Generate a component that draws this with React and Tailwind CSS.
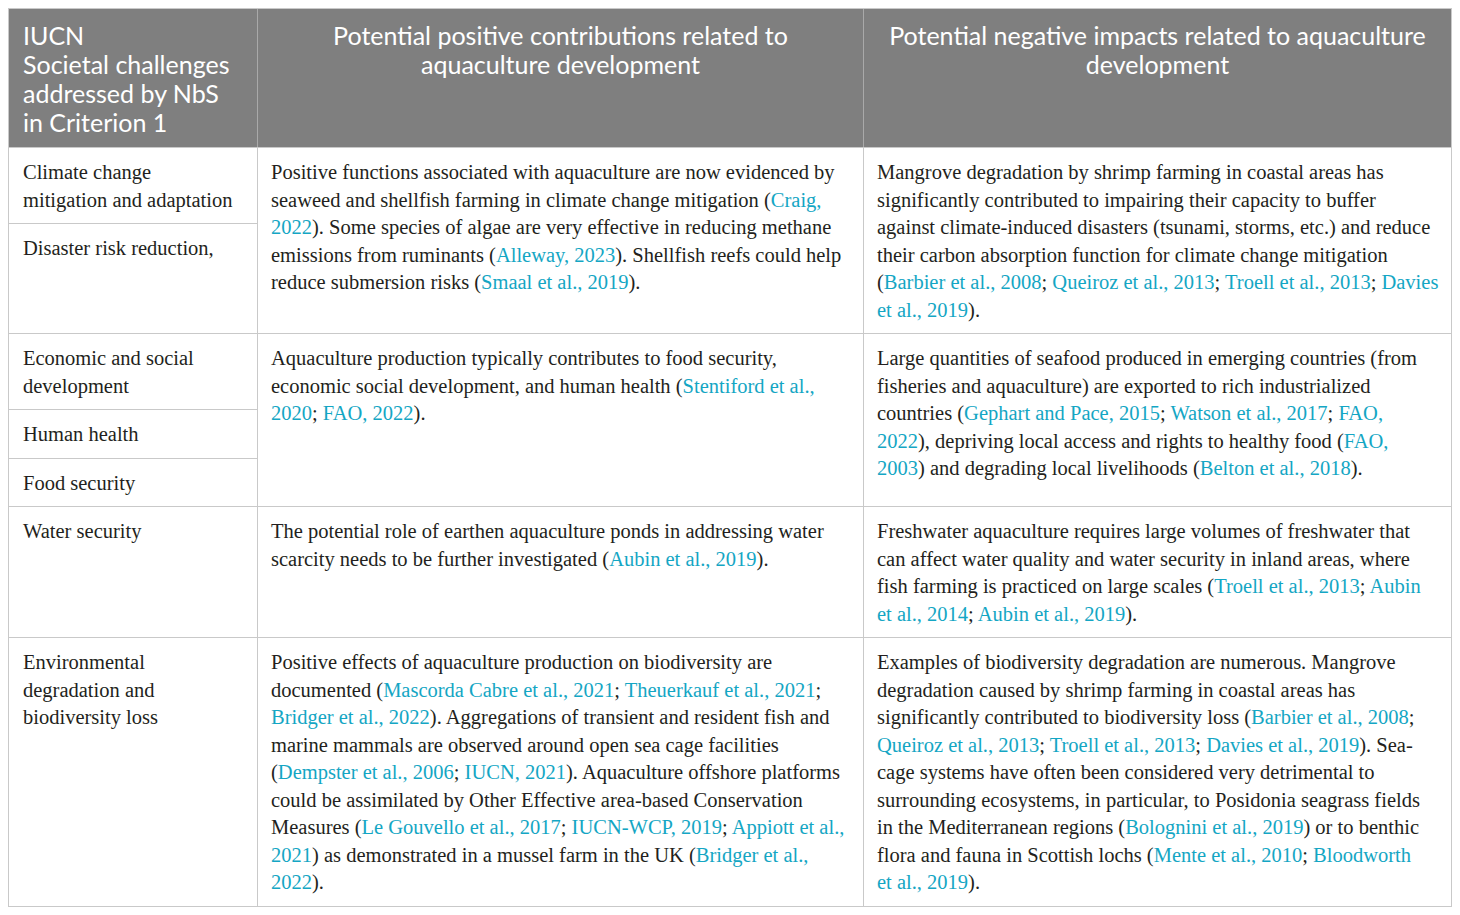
import React from "react";

const L = ({ children }) => <span className="text-[#14a6c4]">{children}</span>;

const Lines = ({ lines }) => (
  <div>
    {lines.map((ln, i) => (
      <div key={i} className="whitespace-nowrap">
        {ln}
      </div>
    ))}
  </div>
);

const cellText = "font-['Liberation_Serif',serif] text-[20.5px] leading-[27.5px] text-[#231f20]";

function Cell({ w, last, children, className = "" }) {
  return (
    <div
      className={`${w} shrink-0 ${last ? "" : "border-r border-[#c9c9c9]"} pt-[11px] pb-[9px] px-[13px] ${className}`}
    >
      {children}
    </div>
  );
}

function Sub({ children, grow, last }) {
  return (
    <div
      className={`${grow ? "flex-1" : ""} ${last ? "" : "border-b border-[#c9c9c9]"} pt-[11px] pb-[9px] pl-[14px] pr-[6px]`}
    >
      {children}
    </div>
  );
}

export default function App() {
  return (
    <div className="bg-white w-[1460px] h-[915px] p-2">
      <div className={`w-[1444px] border border-[#c9c9c9] ${cellText}`}>
        {/* header */}
        <div className="flex bg-[#7f7f7f] text-white font-['Lato',sans-serif] text-[25px] leading-[29px] border-b border-[#c9c9c9]">
          <div className="w-[249px] shrink-0 border-r border-[#a9a9a9] pt-[12px] pb-[10px] pl-[14px] h-[138px]">
            <div>IUCN</div>
            <div>Societal challenges</div>
            <div>addressed by NbS</div>
            <div>in Criterion 1</div>
          </div>
          <div className="w-[606px] shrink-0 border-r border-[#a9a9a9] pt-[12px] text-center">
            <div>Potential positive contributions related to</div>
            <div>aquaculture development</div>
          </div>
          <div className="flex-1 pt-[12px] text-center">
            <div>Potential negative impacts related to aquaculture</div>
            <div>development</div>
          </div>
        </div>

        {/* row 1 */}
        <div className="flex border-b border-[#c9c9c9]">
          <div className="w-[249px] shrink-0 flex flex-col border-r border-[#c9c9c9]">
            <Sub>
              <div>Climate change</div>
              <div>mitigation and adaptation</div>
            </Sub>
            <Sub grow last>
              <div>Disaster risk reduction,</div>
            </Sub>
          </div>
          <Cell w="w-[606px]">
            <Lines
              lines={[
                "Positive functions associated with aquaculture are now evidenced by",
                <>seaweed and shellfish farming in climate change mitigation (<L>Craig,</L></>,
                <><L>2022</L>). Some species of algae are very effective in reducing methane</>,
                <>emissions from ruminants (<L>Alleway, 2023</L>). Shellfish reefs could help</>,
                <>reduce submersion risks (<L>Smaal et al., 2019</L>).</>,
              ]}
            />
          </Cell>
          <Cell w="flex-1" last>
            <Lines
              lines={[
                "Mangrove degradation by shrimp farming in coastal areas has",
                "significantly contributed to impairing their capacity to buffer",
                "against climate-induced disasters (tsunami, storms, etc.) and reduce",
                "their carbon absorption function for climate change mitigation",
                <>(<L>Barbier et al., 2008</L>; <L>Queiroz et al., 2013</L>; <L>Troell et al., 2013</L>; <L>Davies</L></>,
                <><L>et al., 2019</L>).</>,
              ]}
            />
          </Cell>
        </div>

        {/* row 2 */}
        <div className="flex border-b border-[#c9c9c9]">
          <div className="w-[249px] shrink-0 flex flex-col border-r border-[#c9c9c9]">
            <Sub>
              <div>Economic and social</div>
              <div>development</div>
            </Sub>
            <Sub>
              <div>Human health</div>
            </Sub>
            <Sub grow last>
              <div>Food security</div>
            </Sub>
          </div>
          <Cell w="w-[606px]">
            <Lines
              lines={[
                "Aquaculture production typically contributes to food security,",
                <>economic social development, and human health (<L>Stentiford et al.,</L></>,
                <><L>2020</L>; <L>FAO, 2022</L>).</>,
              ]}
            />
          </Cell>
          <Cell w="flex-1" last>
            <Lines
              lines={[
                "Large quantities of seafood produced in emerging countries (from",
                "fisheries and aquaculture) are exported to rich industrialized",
                <>countries (<L>Gephart and Pace, 2015</L>; <L>Watson et al., 2017</L>; <L>FAO,</L></>,
                <><L>2022</L>), depriving local access and rights to healthy food (<L>FAO,</L></>,
                <><L>2003</L>) and degrading local livelihoods (<L>Belton et al., 2018</L>).</>,
              ]}
            />
          </Cell>
        </div>

        {/* row 3 */}
        <div className="flex border-b border-[#c9c9c9]">
          <div className="w-[249px] shrink-0 flex flex-col border-r border-[#c9c9c9]">
            <Sub grow last>
              <div>Water security</div>
            </Sub>
          </div>
          <Cell w="w-[606px]">
            <Lines
              lines={[
                "The potential role of earthen aquaculture ponds in addressing water",
                <>scarcity needs to be further investigated (<L>Aubin et al., 2019</L>).</>,
              ]}
            />
          </Cell>
          <Cell w="flex-1" last>
            <Lines
              lines={[
                "Freshwater aquaculture requires large volumes of freshwater that",
                "can affect water quality and water security in inland areas, where",
                <>fish farming is practiced on large scales (<L>Troell et al., 2013</L>; <L>Aubin</L></>,
                <><L>et al., 2014</L>; <L>Aubin et al., 2019</L>).</>,
              ]}
            />
          </Cell>
        </div>

        {/* row 4 */}
        <div className="flex">
          <div className="w-[249px] shrink-0 flex flex-col border-r border-[#c9c9c9]">
            <Sub grow last>
              <div>Environmental</div>
              <div>degradation and</div>
              <div>biodiversity loss</div>
            </Sub>
          </div>
          <Cell w="w-[606px]">
            <Lines
              lines={[
                "Positive effects of aquaculture production on biodiversity are",
                <>documented (<L>Mascorda Cabre et al., 2021</L>; <L>Theuerkauf et al., 2021</L>;</>,
                <><L>Bridger et al., 2022</L>). Aggregations of transient and resident fish and</>,
                "marine mammals are observed around open sea cage facilities",
                <>(<L>Dempster et al., 2006</L>; <L>IUCN, 2021</L>). Aquaculture offshore platforms</>,
                "could be assimilated by Other Effective area-based Conservation",
                <>Measures (<L>Le Gouvello et al., 2017</L>; <L>IUCN-WCP, 2019</L>; <L>Appiott et al.,</L></>,
                <><L>2021</L>) as demonstrated in a mussel farm in the UK (<L>Bridger et al.,</L></>,
                <><L>2022</L>).</>,
              ]}
            />
          </Cell>
          <Cell w="flex-1" last>
            <Lines
              lines={[
                "Examples of biodiversity degradation are numerous. Mangrove",
                "degradation caused by shrimp farming in coastal areas has",
                <>significantly contributed to biodiversity loss (<L>Barbier et al., 2008</L>;</>,
                <><L>Queiroz et al., 2013</L>; <L>Troell et al., 2013</L>; <L>Davies et al., 2019</L>). Sea-</>,
                "cage systems have often been considered very detrimental to",
                "surrounding ecosystems, in particular, to Posidonia seagrass fields",
                <>in the Mediterranean regions (<L>Bolognini et al., 2019</L>) or to benthic</>,
                <>flora and fauna in Scottish lochs (<L>Mente et al., 2010</L>; <L>Bloodworth</L></>,
                <><L>et al., 2019</L>).</>,
              ]}
            />
          </Cell>
        </div>
      </div>
    </div>
  );
}
